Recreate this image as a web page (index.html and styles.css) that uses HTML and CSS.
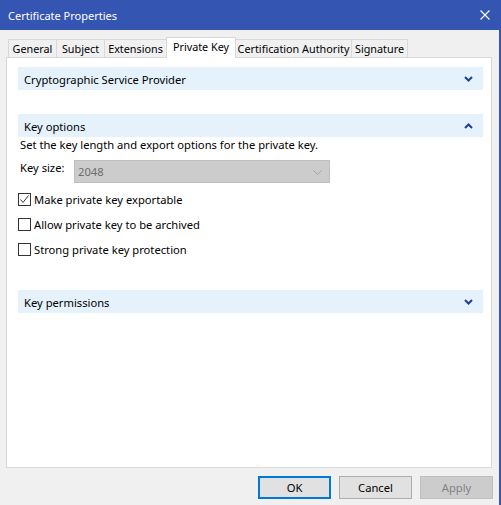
FILE: index.html
```html
<!DOCTYPE html>
<html>
<head>
<meta charset="utf-8">
<link rel="stylesheet" href="styles.css">
</head>
<body>
<div class="window">
  <div class="titlebar">
    <span class="title">Certificate Properties</span>
    <svg class="close" width="10" height="10" viewBox="0 0 10 10"><path d="M0.5 0.5L9.5 9.5M9.5 0.5L0.5 9.5" stroke="#fff" stroke-width="1.1" fill="none"/></svg>
  </div>
  <div class="content">
    <div class="tabs">
      <div class="tab tab-general">General</div>
      <div class="tab tab-subject">Subject</div>
      <div class="tab tab-extensions">Extensions</div>
      <div class="tab tab-private active">Private Key</div>
      <div class="tab tab-ca">Certification Authority</div>
      <div class="tab tab-signature">Signature</div>
    </div>
    <div class="panel">
      <div class="section-header">
        <span>Cryptographic Service Provider</span>
        <svg class="chev" width="9" height="6" viewBox="0 0 9 6"><path d="M1 1L4.5 4.5L8 1" stroke="#1f3f93" stroke-width="2" fill="none"/></svg>
      </div>
      <div class="section-header gap-top">
        <span>Key options</span>
        <svg class="chev" width="9" height="6" viewBox="0 0 9 6"><path d="M1 5L4.5 1.5L8 5" stroke="#1f3f93" stroke-width="2" fill="none"/></svg>
      </div>
      <div class="desc">Set the key length and export options for the private key.</div>
      <div class="field-row">
        <span class="field-label">Key size:</span>
        <div class="combo">
          <span>2048</span>
          <svg width="9" height="5" viewBox="0 0 9 5"><path d="M0.5 0.5L4.5 4.5L8.5 0.5" stroke="#a6a6a6" stroke-width="1" fill="none"/></svg>
        </div>
      </div>
      <div class="checks">
        <label class="check"><span class="box"><svg width="11" height="11" viewBox="0 0 11 11"><path d="M1.5 5.5L4 8.5L9.5 1.5" stroke="#333" stroke-width="1" fill="none"/></svg></span>Make private key exportable</label>
        <label class="check"><span class="box"></span>Allow private key to be archived</label>
        <label class="check"><span class="box"></span>Strong private key protection</label>
      </div>
      <div class="section-header perms">
        <span>Key permissions</span>
        <svg class="chev" width="9" height="6" viewBox="0 0 9 6"><path d="M1 1L4.5 4.5L8 1" stroke="#1f3f93" stroke-width="2" fill="none"/></svg>
      </div>
    </div>
    <div class="footer">
      <button class="btn default">OK</button>
      <button class="btn">Cancel</button>
      <button class="btn disabled">Apply</button>
    </div>
  </div>
</div>
</body>
</html>
```

FILE: styles.css
```css
html, body {
  margin: 0;
  padding: 0;
}
body {
  font-family: "Noto Sans", "DejaVu Sans", sans-serif;
  font-size: 11.2px;
  color: #000;
  background: #f0f0f0;
}
.window {
  width: 501px;
  height: 505px;
  box-sizing: border-box;
  border-right: 2px solid #3555b3;
  display: flex;
  flex-direction: column;
  background: #f0f0f0;
}
.titlebar {
  height: 30px;
  margin-right: -2px;
  background: #3555b3;
  color: #fff;
  display: flex;
  align-items: center;
  justify-content: space-between;
  padding: 0 11px 0 8px;
  font-size: 11px;
  flex: none;
}
.title {
  line-height: 15px;
  margin-top: 1px;
}
.close {
  display: block;
  margin-top: -1px;
}
.content {
  flex: 1;
  display: flex;
  flex-direction: column;
  padding: 7px 7px 0 6px;
}
.tabs {
  display: flex;
  align-items: flex-end;
  height: 20px;
  padding-left: 2px;
  position: relative;
  z-index: 1;
  font-size: 10.8px;
}
.tab {
  height: 17px;
  line-height: 17px;
  box-sizing: content-box;
  padding: 0;
  text-align: center;
  border: 1px solid #d9d9d9;
  border-bottom: none;
  background: #f0f0f0;
  margin-left: -1px;
  white-space: nowrap;
}
.tab:first-child {
  margin-left: 0;
}
.tab-general { width: 47px; }
.tab-subject { width: 47px; }
.tab-extensions { width: 61px; }
.tab-private { width: 68px; }
.tab-ca { width: 115px; }
.tab-signature { width: 55px; }
.tab.active {
  height: 20px;
  line-height: 17px;
  background: #fff;
  margin-bottom: -1px;
  position: relative;
  z-index: 2;
}
.panel {
  height: 411px;
  box-sizing: border-box;
  border: 1px solid #d9d9d9;
  background: #fff;
  padding: 9px 8px 0 11px;
}
.section-header {
  height: 23px;
  background: #e5f1fb;
  display: flex;
  align-items: center;
  justify-content: space-between;
  padding: 0 10px 0 6px;
  line-height: 15px;
}
.section-header span {
  margin-top: 1px;
}
.chev {
  display: block;
}
.gap-top {
  margin-top: 24px;
}
.desc {
  line-height: 15px;
  padding-left: 2px;
}
.field-row {
  display: flex;
  align-items: flex-start;
  margin-top: 8px;
  padding-left: 2px;
}
.field-label {
  width: 54px;
  line-height: 15px;
}
.combo {
  width: 256px;
  height: 23px;
  box-sizing: border-box;
  border: 1px solid #bfbfbf;
  background: #cccccc;
  color: #6d6d6d;
  display: flex;
  align-items: center;
  justify-content: space-between;
  padding: 0 7px 0 3px;
  line-height: 15px;
}
.combo svg {
  display: block;
  margin-top: 1px;
}
.checks {
  margin-top: 10px;
  display: flex;
  flex-direction: column;
  gap: 12px;
}
.check {
  display: flex;
  align-items: center;
  height: 13px;
  line-height: 15px;
}
.box {
  width: 13px;
  height: 13px;
  box-sizing: border-box;
  border: 1px solid #333;
  background: #fff;
  margin-right: 3px;
  flex: none;
  display: flex;
  align-items: center;
  justify-content: center;
}
.box svg {
  display: block;
}
.perms {
  margin-top: 34px;
}
.footer {
  display: flex;
  justify-content: flex-end;
  gap: 8px;
  margin-top: 8px;
  margin-right: -1px;
}
.btn {
  width: 73px;
  height: 23px;
  box-sizing: border-box;
  border: 1px solid #adadad;
  background: #e1e1e1;
  font-family: inherit;
  font-size: 11.2px;
  color: #000;
  padding: 0;
  margin: 0;
  line-height: 15px;
}
.btn.default {
  border: 2px solid #0078d7;
}
.btn.disabled {
  border-color: #bfbfbf;
  background: #cccccc;
  color: #838383;
}
```
